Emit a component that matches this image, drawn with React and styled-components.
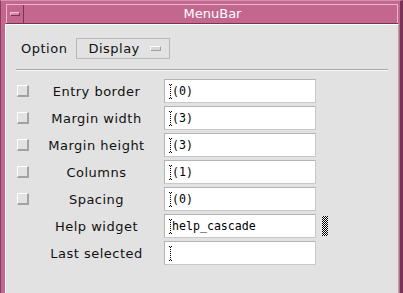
import React from "react";
import styled, {createGlobalStyle} from "styled-components";

const GlobalStyle = createGlobalStyle`
  html, body {
    margin: 0;
    padding: 0;
    background: #e2e2e2;
    overflow: hidden;
  }
  * {
    box-sizing: border-box;
  }
`;

const rows = [
    {label: 'Entry border', value: '(0)', check: true},
    {label: 'Margin width', value: '(3)', check: true},
    {label: 'Margin height', value: '(3)', check: true},
    {label: 'Columns', value: '(1)', check: true},
    {label: 'Spacing', value: '(0)', check: true},
    {label: 'Help widget', value: 'help_cascade', handle: true},
    {label: 'Last selected', value: ''},
];

const Cursor = () => (
    <CursorSvg width="4" height="15" viewBox="0 0 4 15">
        <path d="M0 0h1M2 0h1M1 1h1M1 3h1M1 5h1M1 7h1M1 9h1M1 11h1M1 13h1M0 14h1M2 14h1" stroke="#000" strokeWidth="1" fill="none" transform="translate(0 0.5)"/>
    </CursorSvg>
);

const App = () => {
  return (
    <Window>
        <GlobalStyle/>
        <TitleBar>
            <MenuButton><MenuGlyph/></MenuButton>
            <Title>MenuBar</Title>
        </TitleBar>
        <Content>
            <OptionRow>
                <Label>Option</Label>
                <OptionButton>
                    Display
                    <Indicator/>
                </OptionButton>
            </OptionRow>
            <Separator/>
            <Grid>
                {rows.map((row) => (
                    <React.Fragment key={row.label}>
                        <Cell>{row.check && <Check/>}</Cell>
                        <RowLabel>{row.label}</RowLabel>
                        <Field>
                            <Cursor/>
                            {row.value}
                        </Field>
                        <Cell $end>{row.handle && <Handle/>}</Cell>
                    </React.Fragment>
                ))}
            </Grid>
        </Content>
    </Window>
  )
}

const Window = styled.div`
  width: 403px;
  height: 293px;
  display: flex;
  flex-direction: column;
  background: #c4678f;
  border-left: 1px solid #8a3d62;
  border-right: 3px solid #7a3356;
  border-top: 1px solid #d690b0;
  padding: 3px 1px 0 4px;
`;

const TitleBar = styled.div`
  display: flex;
  height: 20px;
  border-top: 1px solid #e8b8cc;
  border-bottom: 1px solid #7a3356;
  margin-left: 1px;
  margin-right: 1px;
`;

const MenuButton = styled.div`
  width: 18px;
  display: flex;
  align-items: center;
  justify-content: center;
  border-right: 1px solid #7a3356;
  border-left: 1px solid #e8b8cc;
`;

const MenuGlyph = styled.div`
  width: 10px;
  height: 4px;
  border: 1px solid #7a3356;
  border-top-color: #ecc4d4;
  border-left-color: #ecc4d4;
  background: #d48aac;
`;

const Title = styled.div`
  flex: 1;
  text-align: center;
  color: #ffffff;
  font: 13px "DejaVu Sans", sans-serif;
  line-height: 18px;
  padding-left: 4px;
  border-right: 1px solid #e8b8cc;
`;

const Content = styled.div`
  flex: 1;
  background: #e2e2e2;
  border-top: 1px solid #ffffff;
  border-left: 1px solid #ffffff;
  border-right: 1px solid #a8a8a8;
  padding: 13px 0 0 0;
`;

const OptionRow = styled.div`
  display: flex;
  align-items: center;
  gap: 9px;
  padding-left: 15px;
`;

const Label = styled.span`
  font: 13px "DejaVu Sans", sans-serif;
  letter-spacing: 0.5px;
  color: #111;
`;

const OptionButton = styled.div`
  width: 94px;
  height: 21px;
  display: flex;
  align-items: center;
  justify-content: space-between;
  padding: 0 8px 0 11px;
  border: 1px solid #a8a8a8;
  border-top-color: #f4f4f4;
  border-left-color: #f4f4f4;
  outline: 1px solid #b8b8b8;
  outline-offset: -1px;
  font: 13px "DejaVu Sans", sans-serif;
  letter-spacing: 0.5px;
  color: #111;
`;

const Indicator = styled.div`
  width: 11px;
  height: 5px;
  border: 1px solid #a0a0a0;
  border-top-color: #ffffff;
  border-left-color: #ffffff;
  background: #d8d8d8;
`;

const Separator = styled.div`
  height: 1px;
  margin: 10px 10px 8px 10px;
  background: #a8a8a8;
  border-bottom: 1px solid #f8f8f8;
  box-sizing: content-box;
`;

const Grid = styled.div`
  display: grid;
  grid-template-columns: 12px 135px 152px 12px;
  grid-auto-rows: 24px;
  row-gap: 3px;
  margin-left: 11px;
`;

const Cell = styled.div`
  display: flex;
  align-items: center;
  justify-content: ${({$end}) => ($end ? 'flex-end' : 'flex-start')};
`;

const Check = styled.div`
  width: 12px;
  height: 12px;
  flex: none;
  border: 1px solid #ffffff;
  border-right: 2px solid #a2a2a2;
  border-bottom: 2px solid #a2a2a2;
  background: #e2e2e2;
`;

const RowLabel = styled.div`
  display: flex;
  align-items: center;
  justify-content: center;
  font: 13px "DejaVu Sans", sans-serif;
  letter-spacing: 0.5px;
  color: #111;
`;

const Field = styled.div`
  display: flex;
  align-items: center;
  background: #ffffff;
  border: 1px solid #b4b4b4;
  border-bottom-color: #c8c8c8;
  border-right-color: #c8c8c8;
  padding-left: 4px;
  font: 11.6px "DejaVu Sans Mono", monospace;
  color: #000;
`;

const CursorSvg = styled.svg`
  display: block;
  flex: none;
  margin-right: -1px;
`;

const Handle = styled.div`
  width: 6px;
  height: 20px;
  flex: none;
  background-color: #ffffff;
  background-image:
    linear-gradient(45deg, #000 25%, transparent 25%, transparent 75%, #000 75%),
    linear-gradient(45deg, #000 25%, transparent 25%, transparent 75%, #000 75%);
  background-size: 2px 2px;
  background-position: 0 0, 1px 1px;
`;

export default App;
